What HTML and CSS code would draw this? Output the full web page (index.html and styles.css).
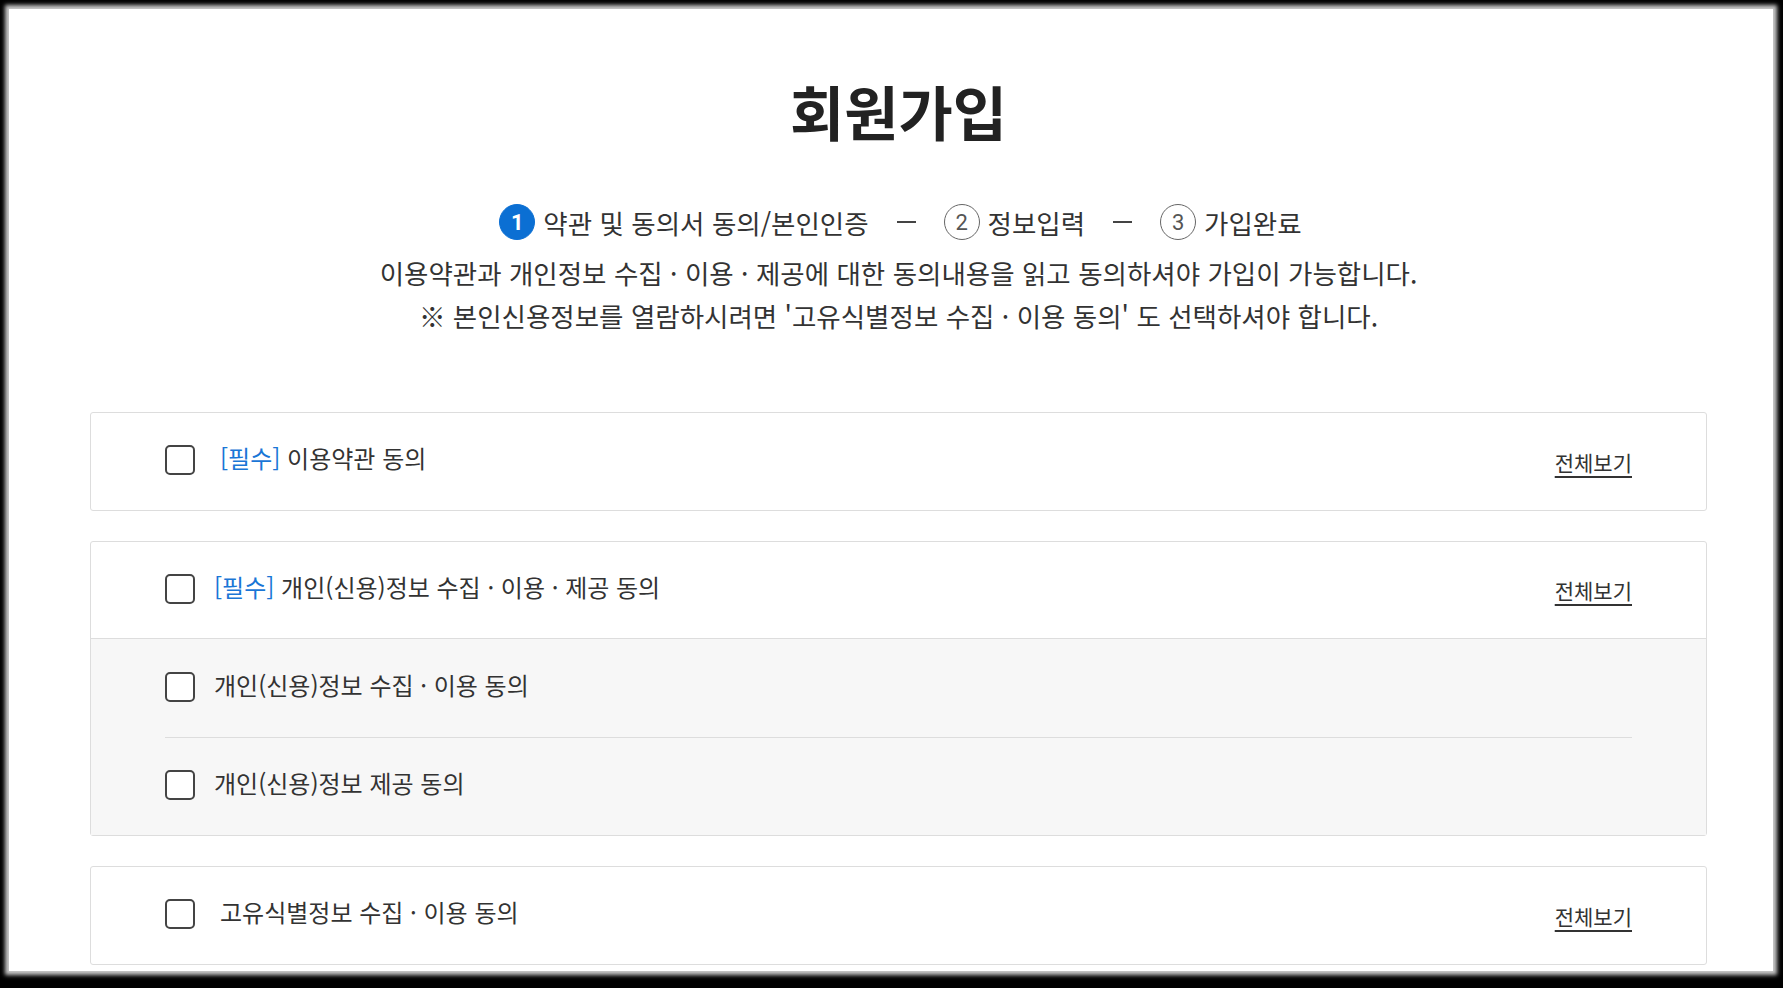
FILE: index.html
```html
<!DOCTYPE html>
<html lang="ko">
<head>
    <meta charset="UTF-8">
    <meta name="viewport" content="width=device-width, initial-scale=1.0">
    <title>회원가입</title>
    <link rel="stylesheet" href="styles.css">
</head>
<body>
    <div class="page">
        <h1 class="title">회원가입</h1>

        <!-- 가입 단계 -->
        <ol class="steps">
            <li class="step on"><span class="step-num">1</span>약관 및 동의서 동의/본인인증</li>
            <li class="step-line"></li>
            <li class="step"><span class="step-num">2</span>정보입력</li>
            <li class="step-line"></li>
            <li class="step"><span class="step-num">3</span>가입완료</li>
        </ol>

        <p class="desc">
            이용약관과 개인정보 수집 · 이용 · 제공에 대한 동의내용을 읽고 동의하셔야 가입이 가능합니다.<br>
            ※ 본인신용정보를 열람하시려면 '고유식별정보 수집 · 이용 동의' 도 선택하셔야 합니다.
        </p>

        <!-- 약관 동의 -->
        <div class="agree-box">
            <div class="agree-row">
                <label class="agree-label wide"><span class="chk"></span><span class="agree-txt"><em class="req">[필수]</em> 이용약관 동의</span></label>
                <a class="view-all" href="#">전체보기</a>
            </div>
        </div>

        <div class="agree-box">
            <div class="agree-row head">
                <label class="agree-label"><span class="chk"></span><span class="agree-txt"><em class="req">[필수]</em> 개인(신용)정보 수집 · 이용 · 제공 동의</span></label>
                <a class="view-all" href="#">전체보기</a>
            </div>
            <div class="agree-sub">
                <div class="agree-row sub">
                    <label class="agree-label"><span class="chk"></span><span class="agree-txt">개인(신용)정보 수집 · 이용 동의</span></label>
                </div>
                <div class="agree-row sub">
                    <label class="agree-label"><span class="chk"></span><span class="agree-txt">개인(신용)정보 제공 동의</span></label>
                </div>
            </div>
        </div>

        <div class="agree-box">
            <div class="agree-row">
                <label class="agree-label wide"><span class="chk"></span><span class="agree-txt">고유식별정보 수집 · 이용 동의</span></label>
                <a class="view-all" href="#">전체보기</a>
            </div>
        </div>
    </div>
</body>
</html>
```

FILE: styles.css
```css
*{
    box-sizing: border-box;
}
html, body{
    margin: 0;
    height: 988px;
    overflow: hidden;
}
body{
    background-color: #000;
    font-family: "Noto Sans CJK KR", "Noto Sans", sans-serif;
    color: #333;
}
.page{
    margin: 9px 10px 0 9px;
    height: 962px;
    padding: 70px 66px 0 81px;
    background-color: #fff;
    box-shadow: 0 0 4px 4px #c8c8c8;
    overflow: hidden;
}
.title{
    margin: 0;
    text-align: center;
    font-size: 59px;
    line-height: 64px;
    font-weight: 700;
    color: #222;
}
.steps{
    display: flex;
    justify-content: center;
    align-items: center;
    margin: 59px 0 0;
    padding: 0 0 0 4px;
    list-style: none;
    height: 40px;
}
.step{
    display: flex;
    align-items: center;
    font-size: 26.5px;
    color: #333;
}
.step-num{
    display: flex;
    justify-content: center;
    align-items: center;
    width: 36px;
    height: 36px;
    margin-right: 8px;
    border: 1px solid #666;
    border-radius: 50%;
    font-family: Roboto, "Noto Sans", sans-serif;
    font-size: 22px;
    color: #555;
}
.step.on .step-num{
    border-color: #0b6fd3;
    background-color: #0b6fd3;
    color: #fff;
    font-weight: 700;
}
.step-line{
    width: 19px;
    height: 1.5px;
    margin: 0 28px;
    background-color: #444;
}
.desc{
    margin: 9px 0 0;
    text-align: center;
    font-size: 26.5px;
    line-height: 43px;
    color: #333;
}
.agree-box{
    margin-top: 30px;
    border: 1px solid #ddd;
    border-radius: 3px;
    background-color: #fff;
}
.agree-box:first-of-type{
    margin-top: 75px;
}
.agree-row{
    display: flex;
    justify-content: space-between;
    align-items: center;
    height: 97px;
    padding: 0 74px;
}
.agree-row.head{
    border-bottom: 1px solid #ddd;
}
.agree-sub{
    padding: 0 74px;
    background-color: #f7f7f7;
}
.agree-sub .agree-row + .agree-row{
    border-top: 1px solid #ddd;
}
.agree-row.sub{
    height: 98px;
    padding: 0;
}
.agree-label{
    display: flex;
    align-items: center;
    gap: 19px;
    padding-bottom: 3px;
    font-size: 24px;
    color: #333;
}
.agree-label.wide{
    gap: 25px;
}
.agree-txt{
    padding-bottom: 5px;
}
.chk{
    width: 30px;
    height: 30px;
    border: 2px solid #444;
    border-radius: 5px;
    background-color: #fff;
}
.req{
    font-style: normal;
    color: #1a76d6;
}
.view-all{
    font-size: 21px;
    color: #333;
    text-underline-offset: 5px;
}
```
